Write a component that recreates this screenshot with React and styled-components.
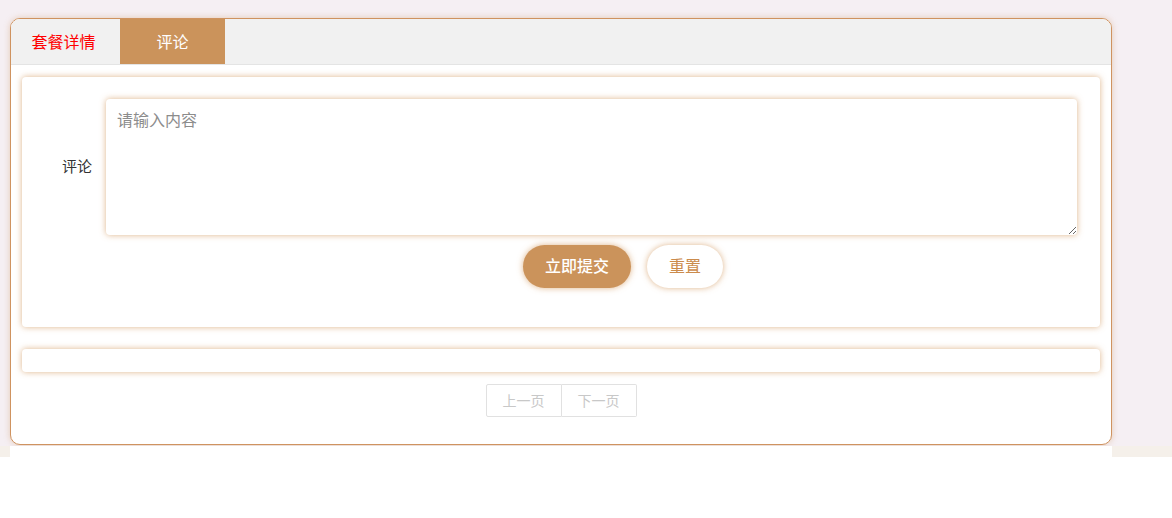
import React, { useState } from "react";
import styled, { createGlobalStyle } from "styled-components";

const Global = createGlobalStyle`
  html, body { margin: 0; padding: 0; background: #fff; }
  body { font-family: "Microsoft YaHei", "Noto Sans CJK SC", "Liberation Sans", sans-serif; }
  * { box-sizing: border-box; }
`;

const Page = styled.div`
  background: #f5eff3;
  padding: 18px 60px 0 10px;
  height: 446px;
`;

const Strip = styled.div`
  background: #f5f0ea;
  height: 11px;
  padding: 0 60px 0 10px;
`;

const StripInner = styled.div`
  background: #fff;
  height: 100%;
  width: 1102px;
`;

const Card = styled.div`
  width: 1102px;
  height: 427px;
  background: #fff;
  border: 1px solid #cf9360;
  border-radius: 10px;
  box-shadow: 0 0 6px rgba(205, 147, 90, 0.4);
  overflow: hidden;
`;

const TabBar = styled.div`
  display: flex;
  height: 46px;
  background: #f1f1f1;
  border-bottom: 1px solid #e4e4e4;
`;

const Tab = styled.div`
  width: ${(p) => p.$w}px;
  height: 45px;
  display: flex;
  align-items: center;
  justify-content: center;
  padding-right: ${(p) => p.$pr || 0}px;
  padding-bottom: 2px;
  font-size: 16px;
  color: ${(p) => (p.$active ? "#fff" : "#ff0000")};
  background: ${(p) => (p.$active ? "#cb935b" : "#f1f1f1")};
  cursor: pointer;
`;

const Body = styled.div`
  padding: 12px 11px 0 11px;
  display: flex;
  flex-direction: column;
`;

const Panel = styled.div`
  background: #fff;
  border-radius: 4px;
  box-shadow: 0 0 6px rgba(210, 150, 90, 0.7);
  height: ${(p) => p.$h}px;
  margin-bottom: ${(p) => p.$mb || 0}px;
`;

const FormPanel = styled(Panel)`
  padding: 22px 23px 0 0;
  display: flex;
  flex-direction: column;
`;

const FormRow = styled.div`
  display: flex;
  align-items: center;
`;

const Label = styled.div`
  width: 84px;
  padding-right: 14px;
  padding-bottom: 4px;
  text-align: right;
  font-size: 15px;
  color: #333;
`;

const TextArea = styled.textarea`
  flex: 1;
  height: 136px;
  border: none;
  border-radius: 4px;
  box-shadow: 0 0 6px rgba(210, 150, 90, 0.7);
  padding: 8px 11px;
  font-family: inherit;
  font-size: 16px;
  color: #333;
  resize: both;
  outline: none;
  &::placeholder { color: #8c8c8c; }
`;

const Actions = styled.div`
  display: flex;
  gap: 16px;
  padding-left: 501px;
  margin-top: 10px;
`;

const PillButton = styled.button`
  height: 43px;
  width: ${(p) => p.$w}px;
  padding: 0 0 3px;
  border-radius: 22px;
  border: none;
  font-family: inherit;
  font-size: 16px;
  font-weight: ${(p) => (p.$primary ? 500 : 400)};
  color: ${(p) => (p.$primary ? "#fff" : "#cb8b4c")};
  background: ${(p) => (p.$primary ? "#cb935b" : "#fff")};
  box-shadow: 0 0 6px rgba(210, 150, 90, 0.7);
  cursor: pointer;
`;

const Pager = styled.div`
  display: flex;
  justify-content: center;
  margin-top: 12px;
`;

const PageBtn = styled.button`
  width: ${(p) => p.$w}px;
  height: 33px;
  padding: 0 0 2px;
  background: #fff;
  border: 1px solid #e1e1e1;
  border-left-width: ${(p) => (p.$first ? 1 : 0)}px;
  border-radius: ${(p) => (p.$first ? "2px 0 0 2px" : "0 2px 2px 0")};
  font-family: inherit;
  font-size: 14px;
  color: #c8c8c8;
  cursor: not-allowed;
`;

export default function App() {
  const [tab, setTab] = useState(1);
  return (
    <>
      <Global />
      <Page>
        <Card>
          <TabBar>
            <Tab $w={109} $pr={4} $active={tab === 0} onClick={() => setTab(0)}>套餐详情</Tab>
            <Tab $w={105} $active={tab === 1} onClick={() => setTab(1)}>评论</Tab>
          </TabBar>
          <Body>
            <FormPanel $h={250} $mb={22}>
              <FormRow>
                <Label>评论</Label>
                <TextArea placeholder="请输入内容" />
              </FormRow>
              <Actions>
                <PillButton $primary $w={108}>立即提交</PillButton>
                <PillButton $w={76}>重置</PillButton>
              </Actions>
            </FormPanel>
            <Panel $h={23} />
            <Pager>
              <PageBtn $first $w={76}>上一页</PageBtn>
              <PageBtn $w={75}>下一页</PageBtn>
            </Pager>
          </Body>
        </Card>
      </Page>
      <Strip>
        <StripInner />
      </Strip>
    </>
  );
}
